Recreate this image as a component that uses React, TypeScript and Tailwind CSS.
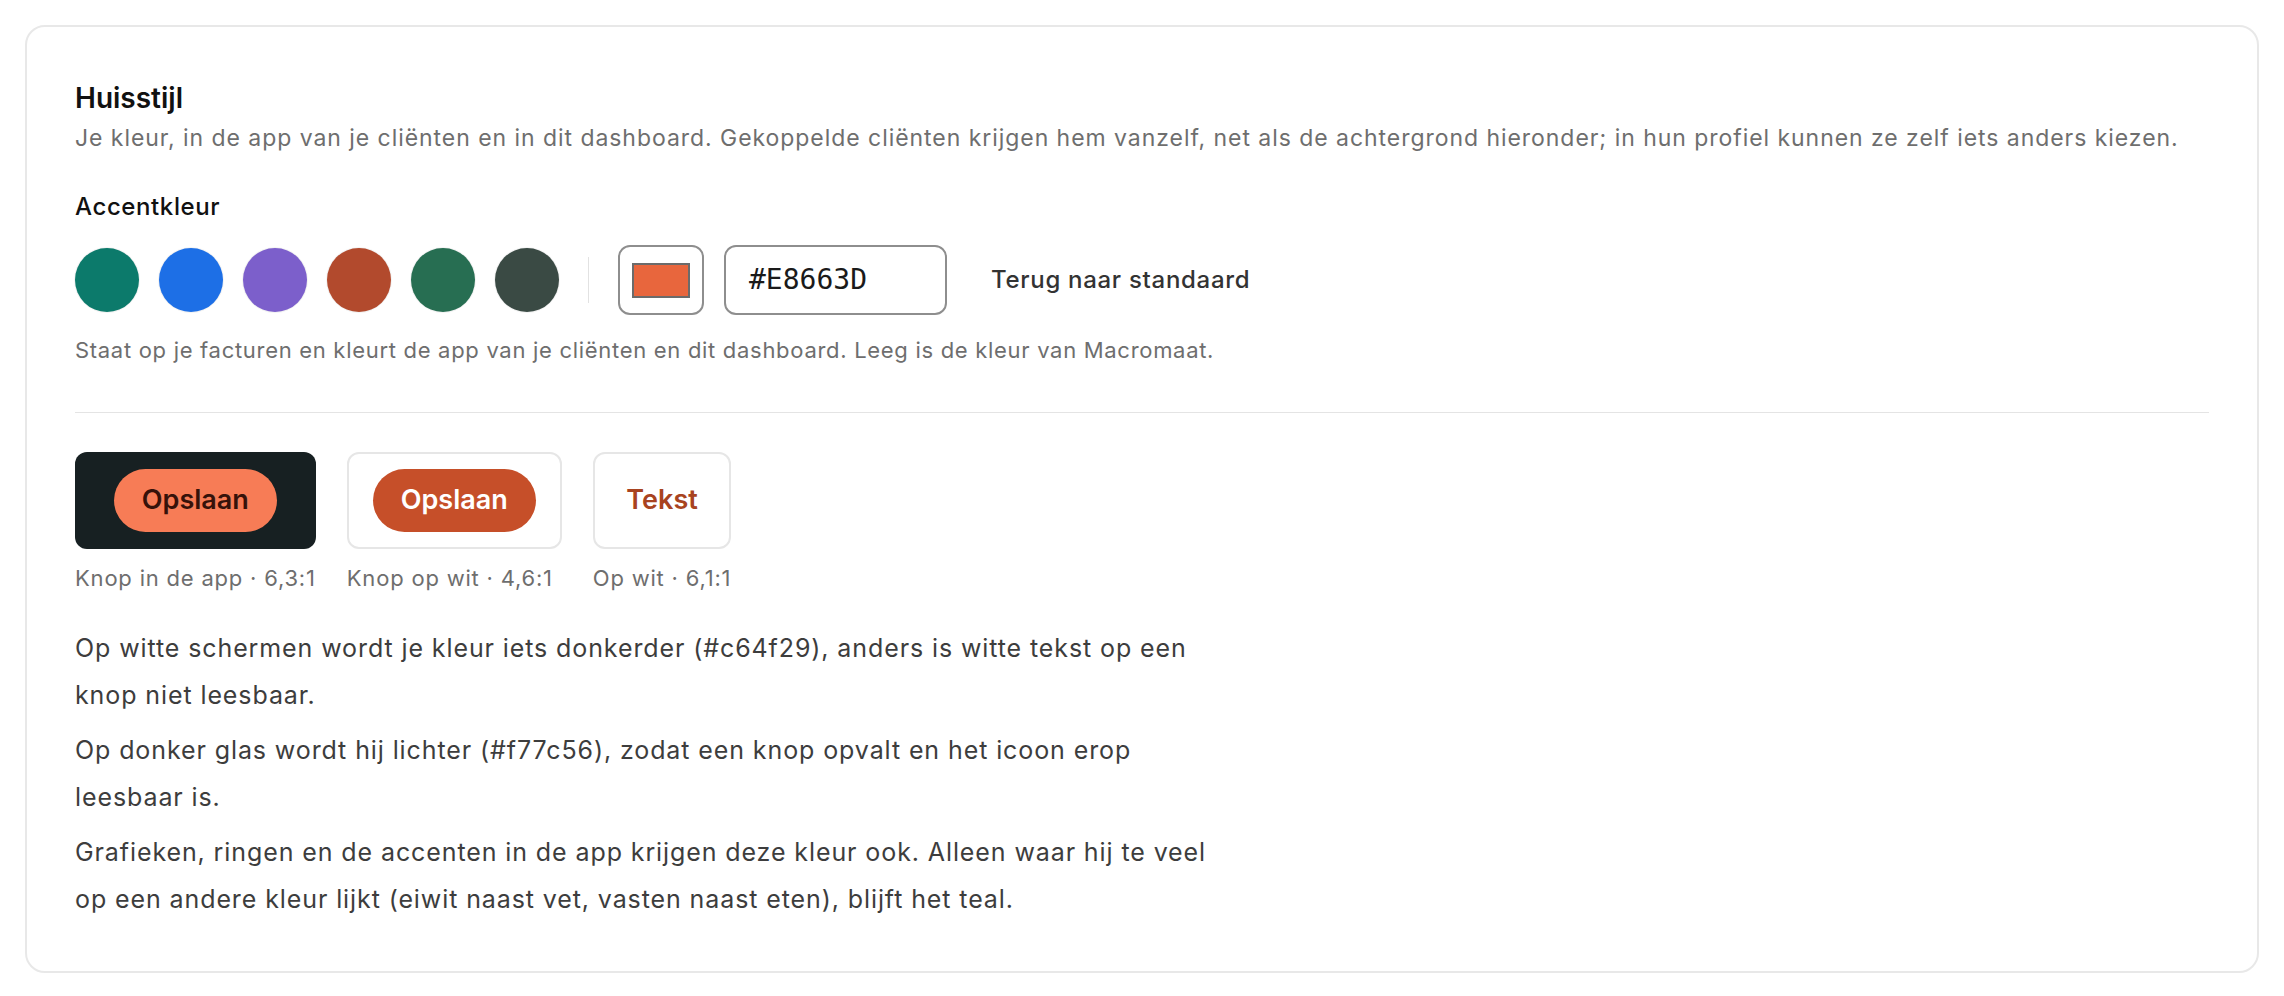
const SWATCHES = ["#0c7a6b", "#1d6fe6", "#7c5fcb", "#b24a2d", "#276e52", "#3a4a44"];

function Preview({ caption, boxClass, children }: { caption: string; boxClass: string; children: React.ReactNode }) {
  return (
    <div className="flex flex-col">
      <div className={`flex h-[97px] items-center justify-center rounded-[12px] px-[24px] ${boxClass}`}>{children}</div>
      <p className="mt-[15px] whitespace-nowrap text-[22px] leading-[28px] tracking-[0.8px] text-[#6e6e6e]">{caption}</p>
    </div>
  );
}

export default function App() {
  return (
    <div className="min-h-screen bg-white p-[25px] font-['Inter',sans-serif] text-[#111]">
      <div className="rounded-[20px] border-2 border-[#e8e8e8] px-[48px] pb-[48px] pt-[53px]">
        <h2 className="text-[28px] font-semibold leading-[36px] text-[#111]">Huisstijl</h2>
        <p className="mt-[7px] text-[23px] leading-[30px] tracking-[0.95px] text-[#6e6e6e]">
          Je kleur, in de app van je cliënten en in dit dashboard. Gekoppelde cliënten krijgen hem vanzelf, net als de
          achtergrond hieronder; in hun profiel kunnen ze zelf iets anders kiezen.
        </p>

        <p className="mt-[39px] text-[24px] font-medium leading-[30px] tracking-[0.6px] text-[#111]">Accentkleur</p>
        <div className="mt-[23px] flex h-[70px] items-center gap-[20px]">
          {SWATCHES.map((c) => (
            <button
              key={c}
              className="h-[64px] w-[64px] rounded-full ring-1 ring-black/5"
              style={{ backgroundColor: c }}
            />
          ))}
          <span className="mx-[9px] h-[46px] w-px bg-[#e2e2e2]" />
          <div className="flex h-[70px] w-[86px] items-center justify-center rounded-[12px] border-2 border-[#8e8e8e]">
            <span className="h-[35px] w-[58px] border-2 border-[#6b6b6b] bg-[#E8663D]" />
          </div>
          <div className="flex h-[70px] w-[223px] items-center rounded-[12px] border-2 border-[#8e8e8e] pl-[23px] font-['DejaVu_Sans_Mono',monospace] text-[28px] text-[#1a1a1a]">
            #E8663D
          </div>
          <button className="ml-[24px] text-[24px] font-medium tracking-[0.7px] text-[#333]">Terug naar standaard</button>
        </div>
        <p className="mt-[21px] text-[22px] leading-[28px] tracking-[0.7px] text-[#6e6e6e]">
          Staat op je facturen en kleurt de app van je cliënten en dit dashboard. Leeg is de kleur van Macromaat.
        </p>

        <hr className="mt-[48px] border-0 border-t border-[#e4e4e4]" />

        <div className="mt-[39px] flex items-start gap-[31px]">
          <Preview caption="Knop in de app · 6,3:1" boxClass="bg-[#172022]">
            <span className="flex h-[63px] items-center rounded-full bg-[#f77c56] px-[28px] text-[27px] font-semibold text-[#36120a]">
              Opslaan
            </span>
          </Preview>
          <Preview caption="Knop op wit · 4,6:1" boxClass="border-2 border-[#e6e6e6] bg-white">
            <span className="flex h-[63px] items-center rounded-full bg-[#c64f29] px-[28px] text-[27px] font-semibold text-white">
              Opslaan
            </span>
          </Preview>
          <Preview caption="Op wit · 6,1:1" boxClass="border-2 border-[#e6e6e6] bg-white">
            <span className="text-[27px] font-semibold text-[#a84320]">Tekst</span>
          </Preview>
        </div>

        <div className="mt-[33px] max-w-[1140px] space-y-[8px] text-[25px] leading-[47px] tracking-[0.9px] text-[#3d3d3d]">
          <p>Op witte schermen wordt je kleur iets donkerder (#c64f29), anders is witte tekst op een knop niet leesbaar.</p>
          <p>Op donker glas wordt hij lichter (#f77c56), zodat een knop opvalt en het icoon erop leesbaar is.</p>
          <p>
            Grafieken, ringen en de accenten in de app krijgen deze kleur ook. Alleen waar hij te veel op een andere kleur
            lijkt (eiwit naast vet, vasten naast eten), blijft het teal.
          </p>
        </div>
      </div>
    </div>
  );
}
